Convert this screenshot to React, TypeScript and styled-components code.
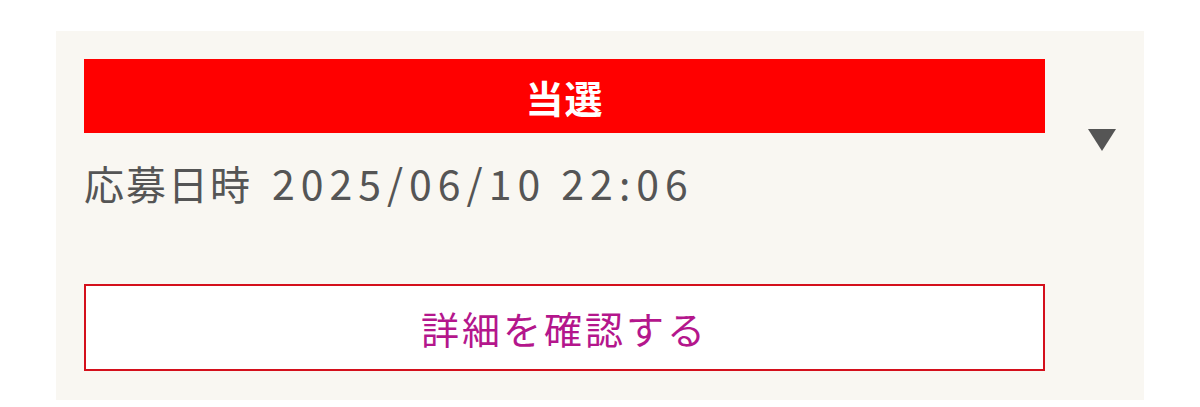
import React from "react";
import styled, { createGlobalStyle } from "styled-components";

const GlobalStyle = createGlobalStyle`
  html, body {
    margin: 0;
    padding: 0;
    background: #ffffff;
    font-family: "Noto Sans CJK JP", "Noto Sans", sans-serif;
  }
  * { box-sizing: border-box; }
`;

const Page = styled.div`
  padding: 31px 56px 0;
`;

const Card = styled.section`
  display: flex;
  align-items: flex-start;
  gap: 43px;
  background: #f9f7f2;
  padding: 28px 28px 29px;
`;

const Main = styled.div`
  flex: 1;
  display: flex;
  flex-direction: column;
`;

const StatusBar = styled.div`
  height: 74px;
  background: #ff0000;
  color: #ffffff;
  font-weight: 700;
  font-size: 38px;
  letter-spacing: 1px;
  display: flex;
  align-items: center;
  justify-content: center;
`;

const DateLine = styled.p`
  margin: 19px 0 0;
  height: 60px;
  line-height: 60px;
  font-size: 40px;
  color: #555555;
  white-space: nowrap;
  display: flex;
  align-items: baseline;
  gap: 20px;
`;

const DateLabel = styled.span`
  letter-spacing: 2px;
`;

const DateValue = styled.span`
  font-size: 41px;
  letter-spacing: 6px;
`;

const DetailButton = styled.button`
  margin-top: 72px;
  height: 87px;
  border: 2px solid #d4101c;
  background: #ffffff;
  color: #b4168c;
  font-family: inherit;
  font-size: 38px;
  letter-spacing: 3px;
  display: flex;
  align-items: center;
  justify-content: center;
  cursor: pointer;
  padding: 0;
`;

const Toggle = styled.span`
  flex: none;
  margin-top: 70px;
  width: 0;
  height: 0;
  border-left: 14px solid transparent;
  border-right: 14px solid transparent;
  border-top: 22px solid #555555;
`;

export default function App() {
  return (
    <>
      <GlobalStyle />
      <Page>
        <Card>
          <Main>
            <StatusBar>当選</StatusBar>
            <DateLine>
              <DateLabel>応募日時</DateLabel>
              <DateValue>2025/06/10 22:06</DateValue>
            </DateLine>
            <DetailButton type="button">詳細を確認する</DetailButton>
          </Main>
          <Toggle aria-label="開く" />
        </Card>
      </Page>
    </>
  );
}
